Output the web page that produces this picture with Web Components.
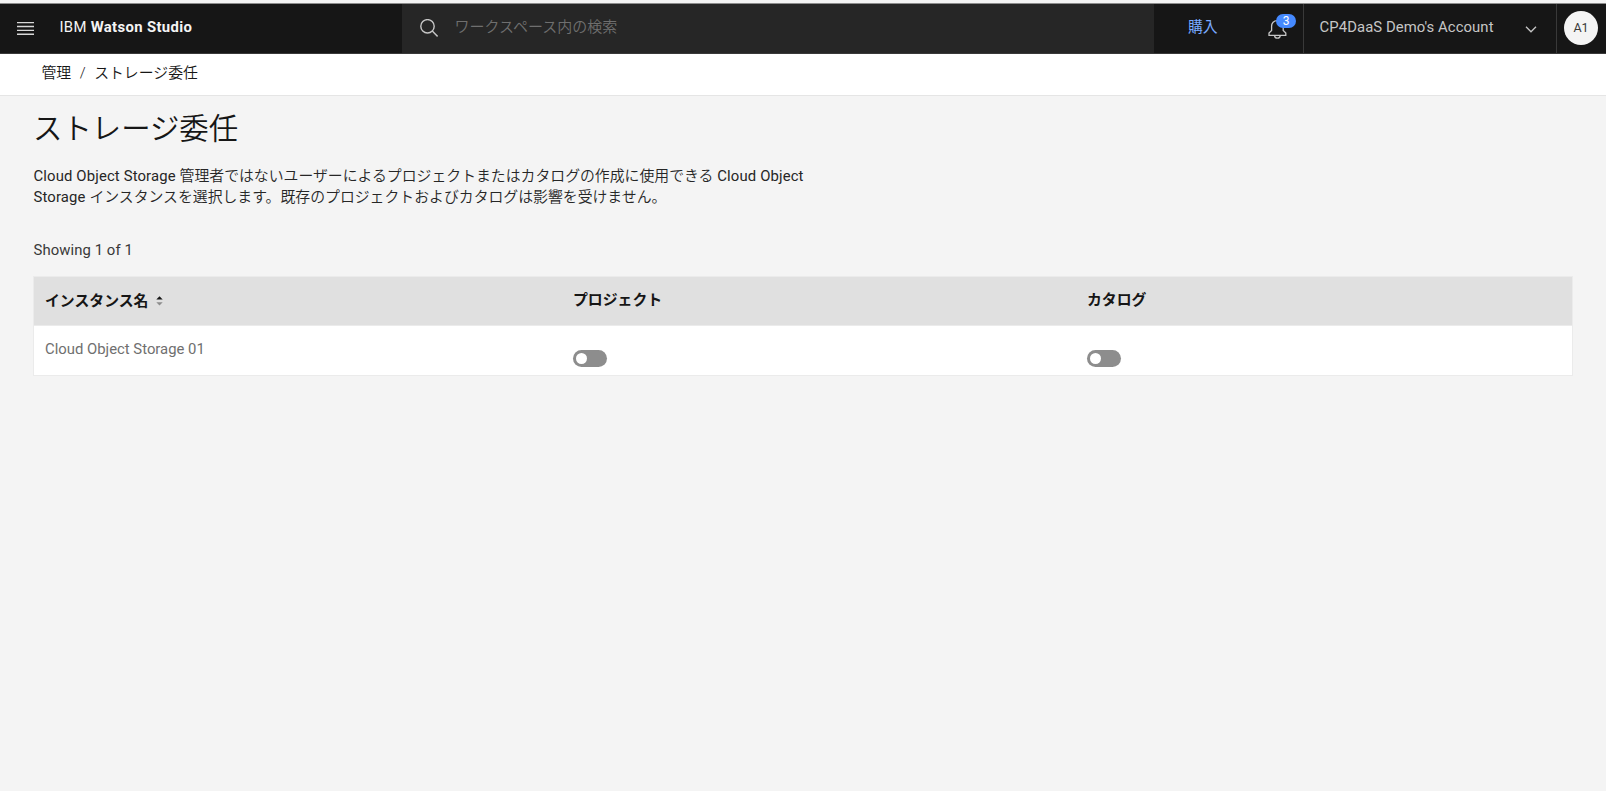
<!DOCTYPE html>
<html lang="ja">
<head>
<meta charset="utf-8">
<title>IBM Watson Studio</title>
<style>
    html, body {
        margin: 0;
        height: 100%;
    }

    body {
        --ui-bg: #f4f4f4;
        --border: #e5e5e5;
        --text: #161616;
        background: var(--ui-bg);
        color: var(--text);
        font-family: Roboto, "Noto Sans CJK JP", sans-serif;
        font-size: 14.87px;
        line-height: 20px;
        overflow: hidden;
    }
</style>
</head>
<body>
<ws-header>
    <ws-brand slot="brand"></ws-brand>
    <ws-search slot="search">ワークスペース内の検索</ws-search>
    <ws-bell slot="bell">3</ws-bell>
    <ws-account slot="account">CP4DaaS Demo's Account</ws-account>
    <ws-avatar slot="avatar">A1</ws-avatar>
</ws-header>
<ws-breadcrumb>
    <span>管理</span>
    <span>/</span>
    <span>ストレージ委任</span>
</ws-breadcrumb>
<ws-page>
    <span slot="title">ストレージ委任</span>
    <ws-lead slot="lead"></ws-lead>
    <ws-latin slot="count" style="--track: .08px">Showing 1 of 1</ws-latin>
    <ws-table></ws-table>
</ws-page>

<script>
function define(name, html) {
    const template = document.createElement("template");
    template.innerHTML = html.trim();

    customElements.define(name, class extends HTMLElement {
        constructor() {
            super();
            const shadow = this.attachShadow({mode: "open"});
            shadow.append(template.content.cloneNode(true));
        }
    });
}

// latin run with its own tracking
define("ws-latin", /*html*/`
    <style>
        :host {
            font-weight: 400;
            letter-spacing: var(--track, 0);
        }

        span {
            white-space: pre;
        }
    </style><span><slot></slot></span>
`);

define("ws-brand", /*html*/`
    <style>
        :host {
            display: flex;
            align-items: center;
            color: #f4f4f4;
        }

        svg {
            margin: 3px 25.5px 0 17px;
        }

        span {
            white-space: pre;
            letter-spacing: .3px;
        }

        b {
            font-weight: 700;
            letter-spacing: .36px;
        }
    </style>
    <svg width="17" height="13" viewBox="0 0 17 13"><path d="M0 .6h17M0 4.5h17M0 8.4h17M0 12.3h17" stroke="#d8d8d8" stroke-width="1.4"/></svg>
    <span>IBM <b>Watson Studio</b></span>
`);

define("ws-search", /*html*/`
    <style>
        :host {
            display: flex;
            align-items: center;
            gap: 16.5px;
            padding-left: 18px;
            background: #262626;
            color: #6f6f6f;
            font-size: 15px;
            font-weight: 350;
        }

        svg {
            margin-top: 2px;
        }
    </style>
    <svg width="18" height="18" viewBox="0 0 18 18" fill="none" stroke="#c6c6c6" stroke-width="1.4"><circle cx="7.5" cy="7.3" r="6.7"/><path d="M12.3 12.1l5.3 5.3"/></svg>
    <slot></slot>
`);

define("ws-bell", /*html*/`
    <style>
        :host {
            display: block;
            position: relative;
            width: 34px;
            height: 49px;
        }

        svg {
            position: absolute;
            left: -1px;
            top: 15px;
        }

        .badge {
            position: absolute;
            left: 7px;
            top: 10px;
            width: 20px;
            height: 14px;
            border-radius: 7px;
            background: #4589ff;
            color: #fff;
            font-size: 12px;
            line-height: 14.5px;
            text-align: center;
        }
    </style>
    <svg width="19" height="20" viewBox="0 0 19 20" fill="none" stroke="#c6c6c6" stroke-width="1.3"><path d="M9.3 1.6C5.7 1.6 3.6 4.2 3.6 7.3v4.2L1 14v2.4h16.8V14l-2.6-2.5V7.3c0-3.1-2.3-5.7-5.9-5.7zM6.6 16.4c0 3.7 5.6 3.7 5.6 0"/></svg>
    <span class="badge"><slot></slot></span>
`);

define("ws-account", /*html*/`
    <style>
        :host {
            display: flex;
            box-sizing: border-box;
            width: 253px;
            align-items: center;
            justify-content: space-between;
            padding: 0 19px 0 15.5px;
            border-left: 1px solid #393939;
            color: #c6c6c6;
        }

        span {
            padding-bottom: 3px;
            letter-spacing: .08px;
        }

        svg {
            margin-top: 2px;
        }
    </style>
    <span><slot></slot></span>
    <svg width="12" height="7" viewBox="0 0 12 7"><path d="M1 .8l5 5 5-5" fill="none" stroke="#c6c6c6" stroke-width="1.3"/></svg>
`);

define("ws-avatar", /*html*/`
    <style>
        :host {
            display: grid;
            box-sizing: border-box;
            width: 50px;
            place-items: center;
            border-left: 1px solid #393939;
        }

        span {
            width: 34px;
            height: 34px;
            margin: 0 1px 1px 0;
            border-radius: 50%;
            background: #f4f4f4;
            color: #393939;
            font-size: 12.5px;
            line-height: 34px;
            text-align: center;
        }
    </style>
    <span><slot></slot></span>
`);

define("ws-header", /*html*/`
    <style>
        :host {
            display: grid;
            grid-template-columns: 402px 752px 115px 34px 253px 50px;
            height: 49px;
            margin-top: 3px;
            border-top: 1px solid #8d8d8d;
            border-bottom: 1px solid #393939;
            background: #161616;
        }

        .buy {
            align-self: center;
            padding-left: 34px;
            color: #78a9ff;
        }

        ::slotted([slot="brand"]), ::slotted([slot="search"]), .buy {
            padding-bottom: 3px;
        }
    </style>
    <slot name="brand"></slot>
    <slot name="search"></slot>
    <span class="buy">購入</span>
    <slot name="bell"></slot>
    <slot name="account"></slot>
    <slot name="avatar"></slot>
`);

define("ws-breadcrumb", /*html*/`
    <style>
        :host {
            display: flex;
            box-sizing: border-box;
            height: 42px;
            gap: 8.5px;
            padding: 9px 0 0 41.5px;
            background: #fff;
            border-bottom: 1px solid var(--border);
            font-weight: 350;
        }
    </style>
    <slot></slot>
`);

define("ws-lead", /*html*/`
    <style>
        :host {
            display: block;
            font-weight: 350;
            line-height: 21px;
            white-space: nowrap;
        }
    </style>
    <ws-latin style="--track: .14px">Cloud Object Storage </ws-latin>管理者ではないユーザーによるプロジェクトまたはカタログの作成に使用できる<ws-latin style="--track: .14px"> Cloud Object</ws-latin><br>
    <ws-latin style="--track: .14px">Storage </ws-latin>インスタンスを選択します。既存のプロジェクトおよびカタログは影響を受けません。
`);

define("ws-page", /*html*/`
    <style>
        :host {
            display: flex;
            flex-direction: column;
            padding: 0 33px;
        }

        h1 {
            margin: 13px 0 0;
            font-size: 29.4px;
            font-weight: 350;
            line-height: 40px;
        }

        .lead {
            margin: 17px 0 0 .5px;
            color: #262626;
        }

        .count {
            margin: 32px 0 16px .5px;
            color: #393939;
        }
    </style>
    <h1><slot name="title"></slot></h1>
    <div class="lead"><slot name="lead"></slot></div>
    <div class="count"><slot name="count"></slot></div>
    <slot></slot>
`);

define("ws-toggle", /*html*/`
    <style>
        :host {
            display: flex;
            box-sizing: border-box;
            width: 34px;
            height: 17px;
            padding: 3px;
            border-radius: 9px;
            background: #8d8d8d;
        }

        i {
            width: 11px;
            height: 11px;
            border-radius: 50%;
            background: #fff;
        }
    </style>
    <i></i>
`);

define("ws-table", /*html*/`
    <style>
        :host {
            display: block;
            border: 1px solid #ebebeb;
            background: #fff;
        }

        .row {
            display: grid;
            grid-template-columns: 528px 514px 1fr;
            box-sizing: border-box;
            height: 49px;
            padding: 13px 0 0 11px;
            color: #6f6f6f;
        }

        .head {
            background: #e0e0e0;
            border-bottom: 1px solid #ebebeb;
            color: var(--text);
            font-weight: 700;
        }

        .name {
            display: flex;
            align-items: center;
            gap: 8px;
            height: 22px;
        }

        ws-toggle {
            margin-top: 11px;
        }
    </style>
    <div class="row head">
        <span class="name">インスタンス名
            <svg width="7" height="10" viewBox="0 0 7 10"><path d="M.3 3.6L3.5.3l3.2 3.3z" fill="#161616"/><path d="M.3 6.2l3.2 3.3 3.2-3.3z" fill="#8d8d8d"/></svg>
        </span>
        <span>プロジェクト</span>
        <span>カタログ</span>
    </div>
    <div class="row">
        <ws-latin>Cloud Object Storage 01</ws-latin>
        <ws-toggle></ws-toggle>
        <ws-toggle></ws-toggle>
    </div>
`);
</script>
</body>
</html>
